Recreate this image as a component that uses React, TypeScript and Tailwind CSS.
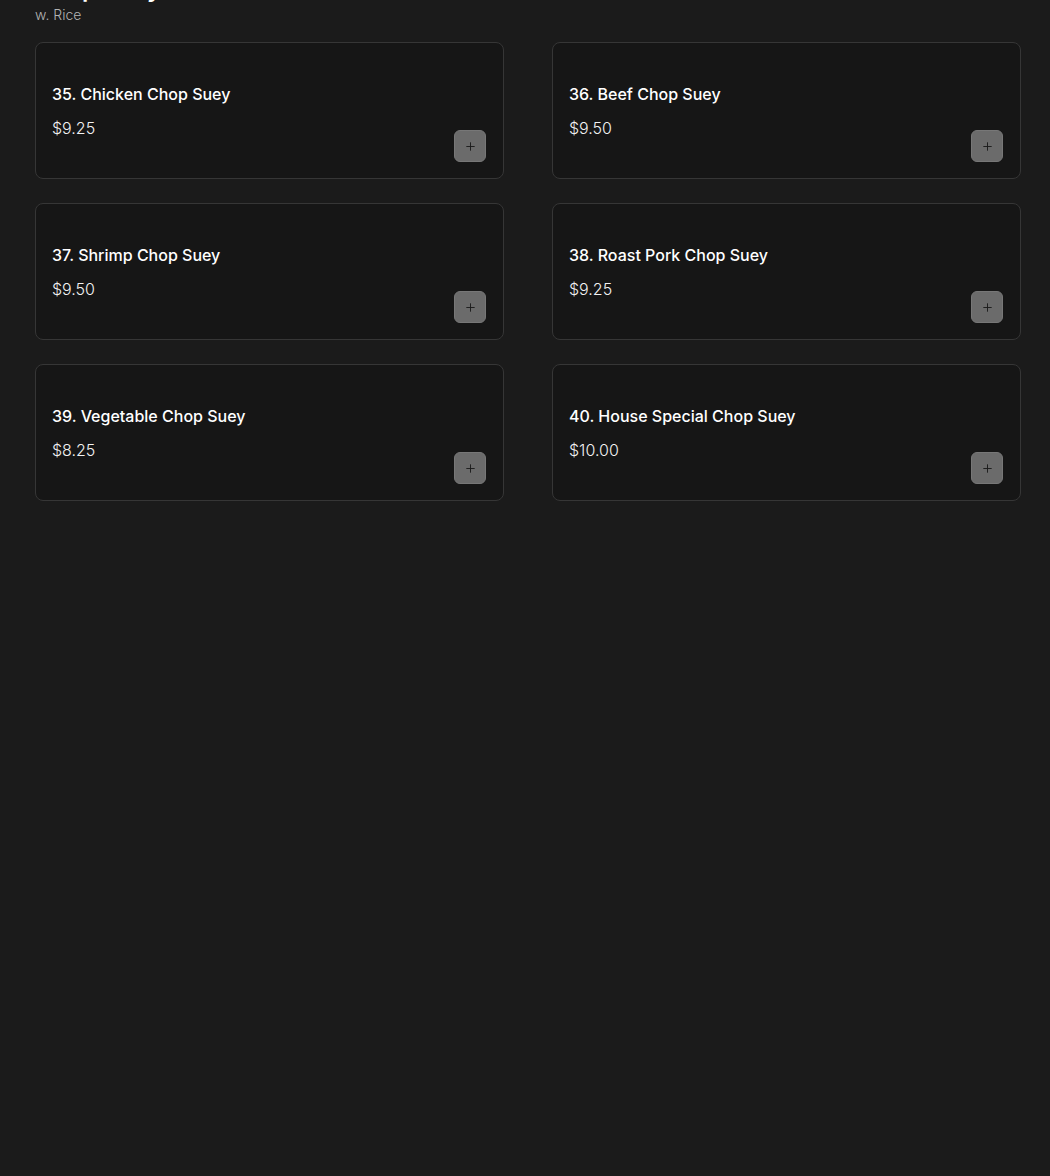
import { Plus } from "lucide-react";

type Item = {
  name: string;
  price: string;
};

const items: Item[] = [
  { name: "35. Chicken Chop Suey", price: "$9.25" },
  { name: "36. Beef Chop Suey", price: "$9.50" },
  { name: "37. Shrimp Chop Suey", price: "$9.50" },
  { name: "38. Roast Pork Chop Suey", price: "$9.25" },
  { name: "39. Vegetable Chop Suey", price: "$8.25" },
  { name: "40. House Special Chop Suey", price: "$10.00" },
];

function MenuCard({ item }: { item: Item }) {
  return (
    <div className="flex items-end justify-between rounded-lg border border-[#363636] bg-[#161616] pl-4 pr-[17px] pt-[39px] pb-4">
      <div className="pb-[22px]">
        <h3 className="text-base leading-6 font-medium text-white">{item.name}</h3>
        <p className="mt-2.5 text-base leading-6 font-light text-[#f2f2f2]">{item.price}</p>
      </div>
      <button
        type="button"
        className="flex h-8 w-8 items-center justify-center rounded-md border border-[#777777] bg-[#6b6b6b] text-[#1c1c1c]"
      >
        <Plus size={13} strokeWidth={1.75} />
      </button>
    </div>
  );
}

export default function App() {
  return (
    <div
      className="min-h-[1176px] overflow-hidden bg-[#1b1b1b] pl-[35px] pr-[29px]"
      style={{ fontFamily: 'Inter, "Open Sans", sans-serif' }}
    >
      <h2 className="-mt-[27px] text-2xl leading-8 font-semibold text-white">Chop Suey</h2>
      <p className="text-sm leading-5 font-light text-[#b3b3b3]">w. Rice</p>

      <div className="mt-[17px] grid grid-cols-2 gap-x-12 gap-y-6">
        {items.map((item) => (
          <MenuCard key={item.name} item={item} />
        ))}
      </div>
    </div>
  );
}
